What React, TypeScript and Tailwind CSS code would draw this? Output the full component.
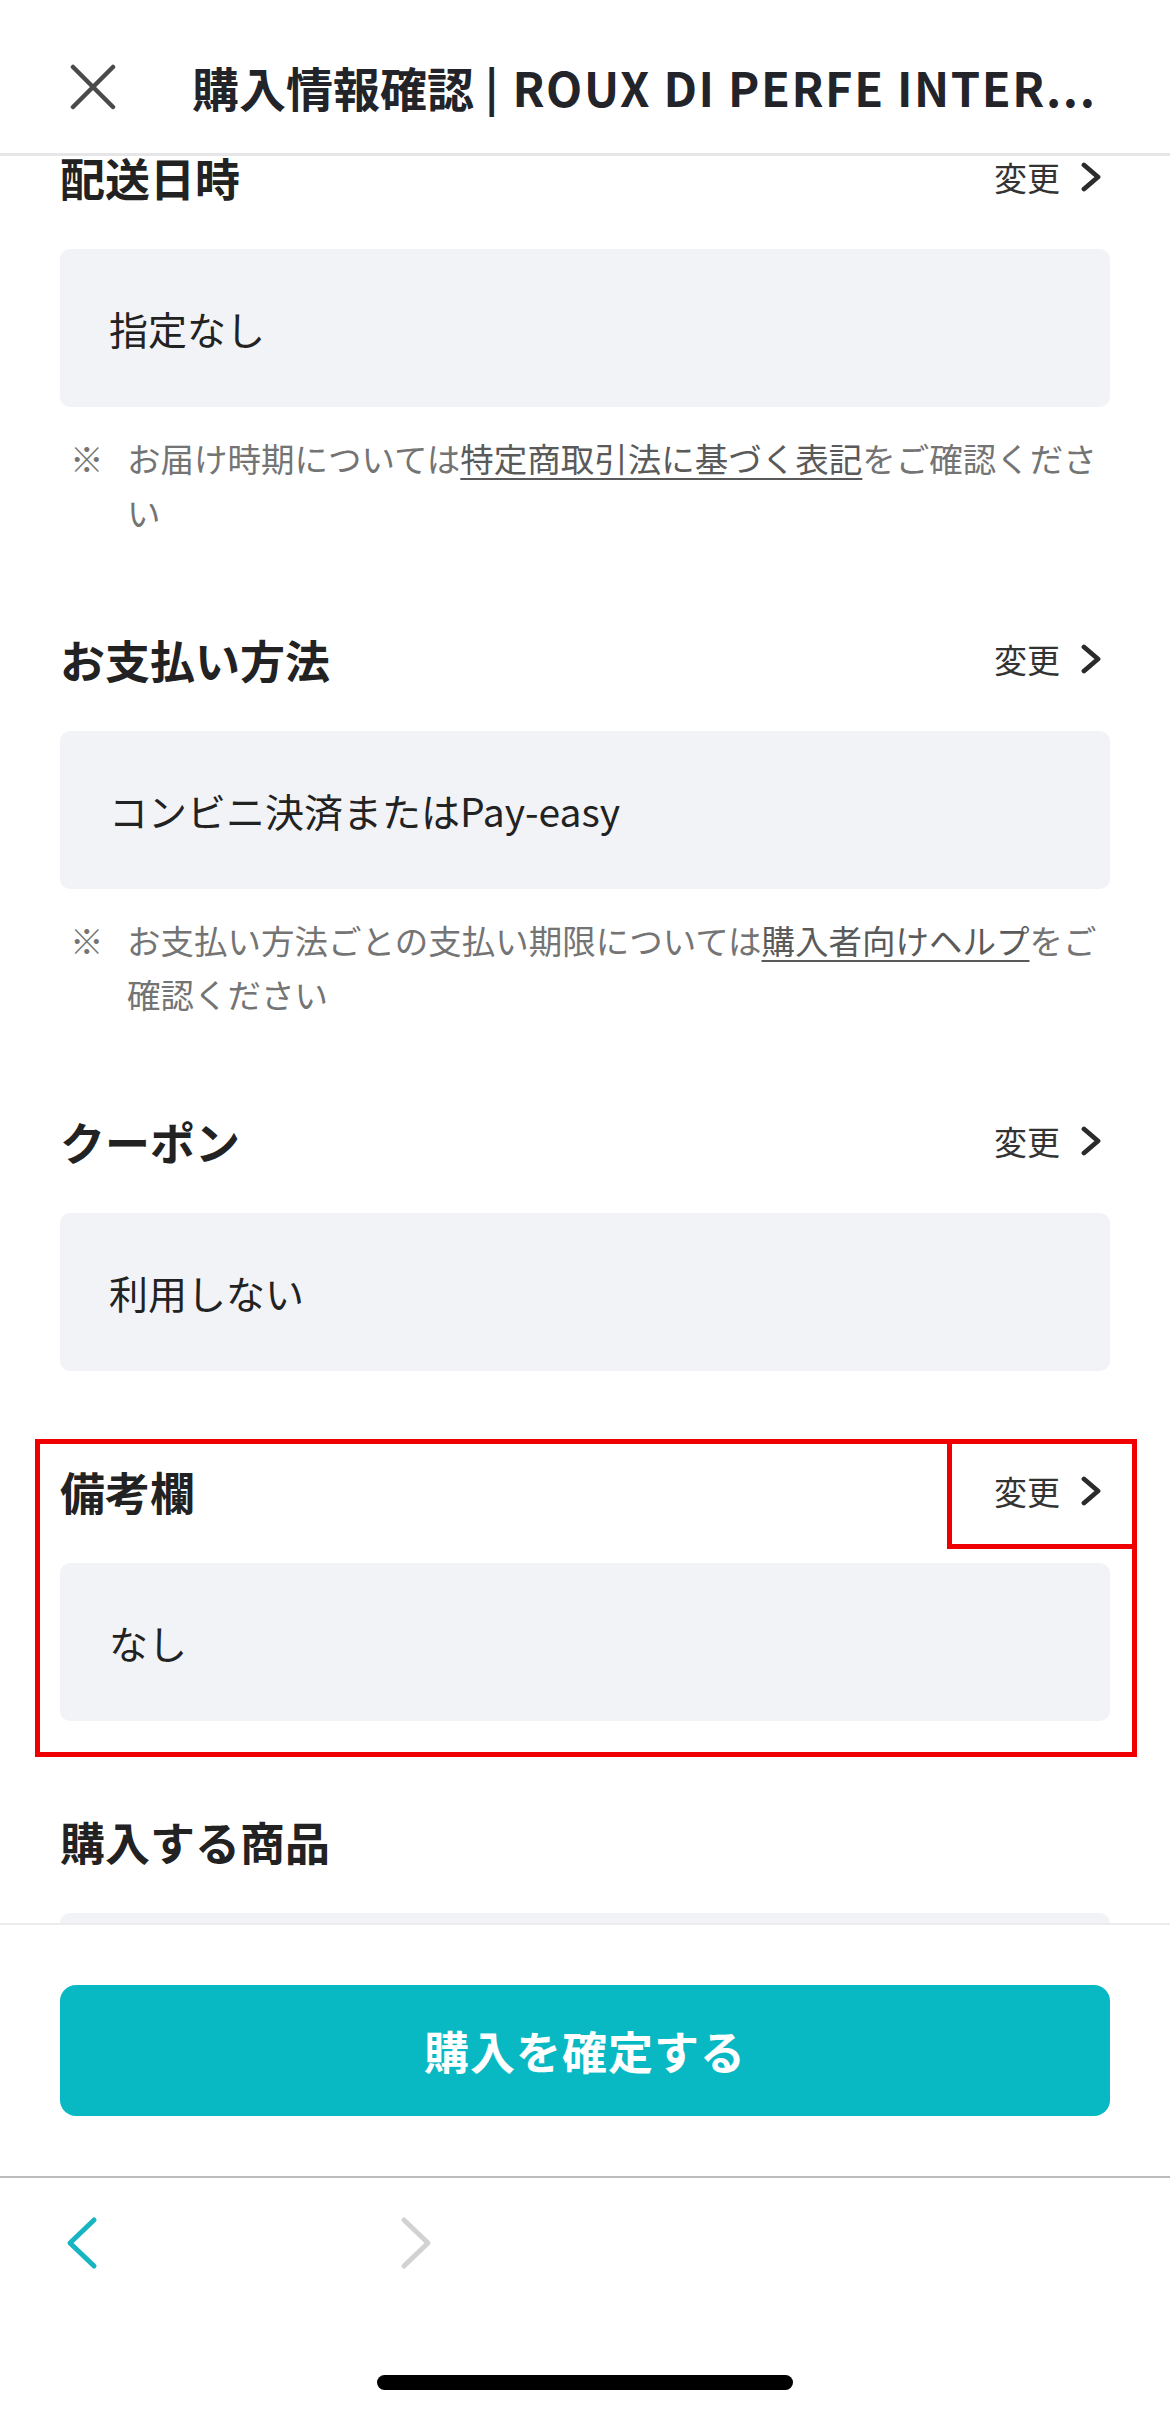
import type { ReactNode } from "react";

const font = "font-['Noto_Sans_CJK_JP','Noto_Sans',sans-serif]";

function ChevronRight({ className = "" }: { className?: string }) {
  return (
    <svg viewBox="0 0 22 30" className={className} fill="none">
      <polyline points="4,3 18,15 4,27" stroke="currentColor" strokeWidth="4.8" strokeLinecap="round" strokeLinejoin="round" />
    </svg>
  );
}

type SectionProps = {
  title: string;
  value: string;
  note?: ReactNode;
  highlight?: boolean;
  editable?: boolean;
};

function Section({ title, value, note, highlight, editable = true }: SectionProps) {
  return (
    <section className="relative px-[60px] pb-[68px]">
      <div className="flex h-[104px] items-center justify-between">
        <h2 className="text-[45px] font-bold leading-none text-[#222]">{title}</h2>
        {editable && (
          <button className="flex items-center gap-[20px] pr-[8px] text-[33px] leading-none text-[#333]">
            変更
            <ChevronRight className="h-[30px] w-[22px] text-[#2b2b2b]" />
          </button>
        )}
      </div>
      <div className="mt-[20px] flex h-[158px] items-center rounded-[10px] bg-[#f2f3f7] px-[49px] text-[39px] text-[#222]">
        {value}
      </div>
      {note && (
        <p className="mt-[24px] flex text-[33.5px] leading-[54px] text-[#747474]">
          <span className="w-[67px] shrink-0 pl-[10px]">※</span>
          <span>{note}</span>
        </p>
      )}

      {/* 注釈用の赤枠 */}
      {highlight && (
        <>
          <div className="pointer-events-none absolute left-[35px] top-0 h-[318px] w-[1102px] border-[5px] border-[#f00000]" />
          <div className="pointer-events-none absolute left-[947px] top-0 h-[110px] w-[190px] border-[5px] border-[#f00000]" />
        </>
      )}
    </section>
  );
}

export default function App() {
  return (
    <div className={`${font} flex h-[2412px] w-[1170px] flex-col overflow-hidden bg-white`}>
      {/* ヘッダー */}
      <header className="relative z-10 flex h-[156px] shrink-0 items-center border-b-[3px] border-[#e6e6e8] bg-white pl-[70px] pr-[50px] pt-[20px]">
        <svg viewBox="0 0 46 46" className="h-[46px] w-[46px] shrink-0" fill="none">
          <line x1="3" y1="3" x2="43" y2="43" stroke="#4a4a4a" strokeWidth="4.5" strokeLinecap="round" />
          <line x1="43" y1="3" x2="3" y2="43" stroke="#4a4a4a" strokeWidth="4.5" strokeLinecap="round" />
        </svg>
        <h1 className="ml-[76px] min-w-0 flex-1 truncate text-[47px] font-bold leading-[60px] text-[#23232a]">
          購入情報確認 <span className="tracking-[1.6px]">| ROUX DI PERFE INTER...</span>
        </h1>
      </header>

      {/* スクロール領域 */}
      <main className="min-h-0 flex-1 overflow-hidden">
        <div className="-mt-[31px]">
          <Section
            title="配送日時"
            value="指定なし"
            note={
              <>
                お届け時期については
                <span className="underline decoration-[2px] underline-offset-[6px] text-[#5a5a5a]">特定商取引法に基づく表記</span>
                をご確認ください
              </>
            }
          />
          <Section
            title="お支払い方法"
            value="コンビニ決済またはPay-easy"
            note={
              <>
                お支払い方法ごとの支払い期限については
                <span className="underline decoration-[2px] underline-offset-[6px] text-[#5a5a5a]">購入者向けヘルプ</span>
                をご確認ください
              </>
            }
          />
          <Section title="クーポン" value="利用しない" />
          <Section title="備考欄" value="なし" highlight />
          <Section title="購入する商品" value="" editable={false} />
        </div>
      </main>

      {/* 確定ボタン */}
      <div className="shrink-0 border-t-[2px] border-[#ececee] bg-white px-[60px] pb-[60px] pt-[60px]">
        <button className="flex h-[131px] w-full items-center justify-center rounded-[16px] bg-[#08b9c4] text-[45px] font-bold tracking-[1px] text-white">
          購入を確定する
        </button>
      </div>

      {/* ブラウザのツールバー */}
      <div className="flex h-[236px] shrink-0 flex-col border-t-[2px] border-[#bcbcbc] bg-white">
        <div className="flex h-[130px] items-center pl-[64px]">
          <svg viewBox="0 0 36 54" className="h-[54px] w-[36px]" fill="none">
            <polyline points="30,4 6,27 30,50" stroke="#16b5c1" strokeWidth="5" strokeLinecap="round" strokeLinejoin="round" />
          </svg>
          <svg viewBox="0 0 36 54" className="ml-[298px] h-[54px] w-[36px]" fill="none">
            <polyline points="6,4 30,27 6,50" stroke="#d2d2d2" strokeWidth="5" strokeLinecap="round" strokeLinejoin="round" />
          </svg>
        </div>
        <div className="mx-auto mt-[67px] h-[15px] w-[416px] rounded-full bg-black" />
      </div>
    </div>
  );
}
